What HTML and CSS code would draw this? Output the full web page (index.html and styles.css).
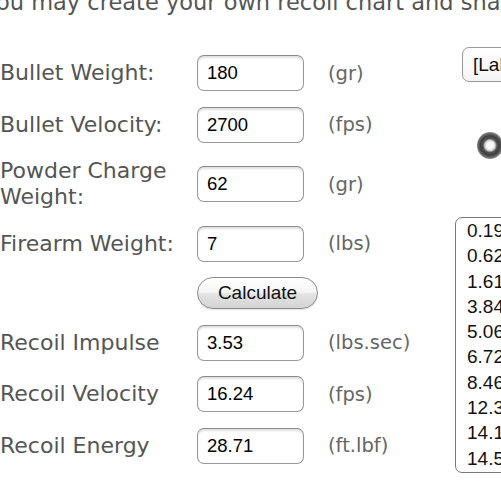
FILE: index.html
```html
<!DOCTYPE html>
<html>
<head>
<meta charset="utf-8">
<link rel="stylesheet" href="styles.css">
</head>
<body>
<p class="intro">You may create your own recoil chart and share it</p>
<div class="layout">
  <form class="calc">
    <label class="lbl">Bullet Weight:</label>
    <input class="field" value="180">
    <span class="unit">(gr)</span>

    <label class="lbl">Bullet Velocity:</label>
    <input class="field" value="2700">
    <span class="unit">(fps)</span>

    <label class="lbl">Powder Charge Weight:</label>
    <input class="field" value="62">
    <span class="unit">(gr)</span>

    <label class="lbl">Firearm Weight:</label>
    <input class="field" value="7">
    <span class="unit">(lbs)</span>

    <span class="lbl"></span>
    <button type="button" class="btn">Calculate</button>
    <span class="unit"></span>

    <label class="lbl">Recoil Impulse</label>
    <input class="field" value="3.53">
    <span class="unit">(lbs.sec)</span>

    <label class="lbl">Recoil Velocity</label>
    <input class="field" value="16.24">
    <span class="unit">(fps)</span>

    <label class="lbl">Recoil Energy</label>
    <input class="field" value="28.71">
    <span class="unit">(ft.lbf)</span>
  </form>
  <div class="side">
    <div class="select">[Label]</div>
    <span class="radio"></span>
    <textarea class="chart" readonly>0.19
0.62
1.61
3.84
5.06
6.72
8.46
12.3
14.1
14.5</textarea>
  </div>
</div>
</body>
</html>
```
FILE: styles.css
```css
html, body {
  margin: 0;
  padding: 0;
  overflow: hidden;
  background: #fff;
  width: 501px;
  height: 500px;
}

body {
  font-family: "DejaVu Sans", Verdana, sans-serif;
  color: #555;
}

.intro {
  margin: -11px 0 1px 0;
  font-size: 22.5px;
  line-height: 26px;
  white-space: nowrap;
  text-indent: -14.8px;
  color: #555;
}

.layout {
  display: flex;
  align-items: flex-start;
}

.calc {
  flex: none;
  width: 455px;
  margin: 0;
  padding-top: 39px;
  display: grid;
  grid-template-columns: 197px 107px auto;
  row-gap: 15.5px;
  align-items: center;
}

.lbl {
  font-size: 22px;
  line-height: 26px;
  color: #555;
}

.unit {
  padding-left: 24px;
  font-size: 19.5px;
  color: #666;
  white-space: nowrap;
}

.field {
  box-sizing: border-box;
  width: 107px;
  height: 36px;
  margin: 0;
  padding: 0 0 0 9px;
  border: 1px solid #999;
  border-top-color: #8a8a8a;
  border-radius: 7px;
  background: #fff;
  box-shadow: inset 0 2px 2px rgba(0, 0, 0, 0.12);
  font-family: "Liberation Sans", Arial, sans-serif;
  font-size: 18.5px;
  color: #000;
  outline: none;
}

.btn {
  box-sizing: border-box;
  width: 121px;
  height: 32px;
  margin: 0;
  padding: 0;
  border: 1px solid #8c8c8c;
  border-radius: 16px;
  background: linear-gradient(#ffffff, #f6f6f6 45%, #e2e2e2 55%, #d4d4d4);
  box-shadow: 0 1px 1px rgba(0, 0, 0, 0.12);
  font-family: "Liberation Sans", Arial, sans-serif;
  font-size: 19px;
  color: #111;
  justify-self: start;
}

.side {
  flex: none;
  display: flex;
  flex-direction: column;
  align-items: flex-start;
  padding-top: 31px;
}

.select {
  box-sizing: border-box;
  margin-left: 7px;
  width: 90px;
  height: 35px;
  padding-left: 10px;
  border: 1px solid #999;
  border-radius: 7px;
  background: linear-gradient(#fff, #f4f4f4);
  font-family: "Liberation Sans", Arial, sans-serif;
  font-size: 19px;
  line-height: 33px;
  color: #111;
  white-space: nowrap;
}

.radio {
  display: block;
  margin: 50px 0 0 22px;
  width: 26px;
  height: 27px;
  border-radius: 50%;
  background:
    radial-gradient(circle at 50% 50%, #ffffff 0, #f2f2f2 4px, #bbbbbb 5.5px, #555 7px, #3e3e3e 9.5px, #6a6a6a 12px, #8a8a8a 13px);
}

.chart {
  box-sizing: border-box;
  display: block;
  margin: 58px 0 0 0;
  width: 120px;
  height: 256px;
  padding: 0 0 0 11px;
  border: 1px solid #777;
  border-radius: 7px;
  background: #fff;
  font-family: "Liberation Sans", Arial, sans-serif;
  font-size: 19px;
  line-height: 25.3px;
  color: #111;
  resize: none;
  overflow: hidden;
  outline: none;
}
```
